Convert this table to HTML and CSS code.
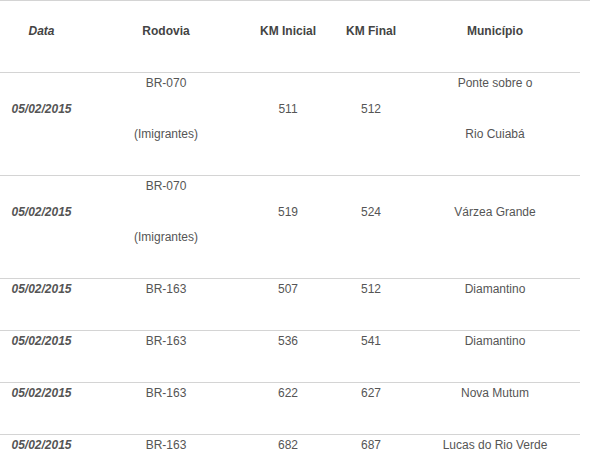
FILE: index.html
```html
<!DOCTYPE html>
<html lang="pt">
<head>
<meta charset="utf-8">
<title>Rodovias</title>
<link rel="stylesheet" href="styles.css">
</head>
<body>
<div class="wrap">
<table class="tbl">
<colgroup>
<col class="c1"><col class="c2"><col class="c3"><col class="c4"><col class="c5">
</colgroup>
<thead>
<tr>
<th class="date-h">Data</th>
<th>Rodovia</th>
<th>KM Inicial</th>
<th>KM Final</th>
<th class="last">Município</th>
</tr>
</thead>
<tbody>
<tr>
<td class="date"><p>05/02/2015</p></td>
<td><p>BR-070</p><p>(Imigrantes)</p></td>
<td><p>511</p></td>
<td><p>512</p></td>
<td class="last"><p>Ponte sobre o</p><p>Rio Cuiabá</p></td>
</tr>
<tr>
<td class="date"><p>05/02/2015</p></td>
<td><p>BR-070</p><p>(Imigrantes)</p></td>
<td><p>519</p></td>
<td><p>524</p></td>
<td class="last"><p>Várzea Grande</p></td>
</tr>
<tr>
<td class="date"><p>05/02/2015</p></td>
<td><p>BR-163</p></td>
<td><p>507</p></td>
<td><p>512</p></td>
<td class="last"><p>Diamantino</p></td>
</tr>
<tr>
<td class="date"><p>05/02/2015</p></td>
<td><p>BR-163</p></td>
<td><p>536</p></td>
<td><p>541</p></td>
<td class="last"><p>Diamantino</p></td>
</tr>
<tr>
<td class="date"><p>05/02/2015</p></td>
<td><p>BR-163</p></td>
<td><p>622</p></td>
<td><p>627</p></td>
<td class="last"><p>Nova Mutum</p></td>
</tr>
<tr>
<td class="date"><p>05/02/2015</p></td>
<td><p>BR-163</p></td>
<td><p>682</p></td>
<td><p>687</p></td>
<td class="last"><p>Lucas do Rio Verde</p></td>
</tr>
</tbody>
</table>
</div>
</body>
</html>
```

FILE: styles.css
```css
html, body {
  margin: 0;
  padding: 0;
  background: #fff;
}
body {
  font-family: "Liberation Sans", Arial, sans-serif;
  font-size: 12px;
  color: #555;
}
.wrap {
  border-top: 1px solid #d4d4d4;
  width: 590px;
}
.tbl {
  width: 580px;
  table-layout: fixed;
  border-collapse: separate;
  border-spacing: 0;
}
.c1 { width: 83px; }
.c2 { width: 166px; }
.c3 { width: 78px; }
.c4 { width: 88px; }
.c5 { width: 165px; }
.tbl th {
  padding: 20px 0 30px;
  line-height: 21px;
  font-weight: bold;
  color: #444;
  text-align: center;
  vertical-align: top;
}
.tbl th.date-h {
  font-style: italic;
}
.tbl td {
  border-top: 1px solid #d4d4d4;
  padding: 0;
  text-align: center;
  vertical-align: middle;
  line-height: 21px;
}
.tbl td p {
  margin: 0 0 30px;
}
.tbl td.date {
  font-weight: bold;
  font-style: italic;
}
.tbl .last {
  padding-right: 5px;
}
```
